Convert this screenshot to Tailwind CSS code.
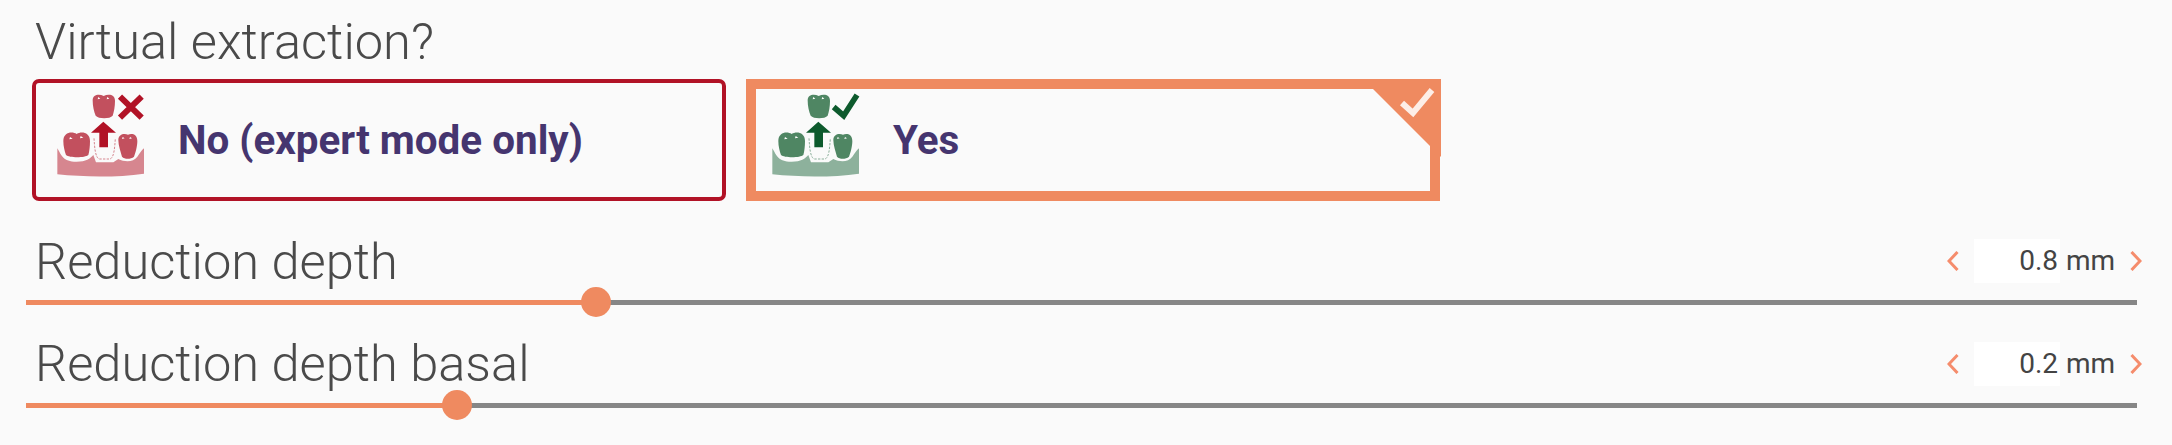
<!DOCTYPE html>
<html lang="en">
<head>
    <meta charset="UTF-8">
    <title>Virtual extraction</title>
    <script src="https://cdn.jsdelivr.net/npm/@tailwindcss/browser@4"></script>
</head>
<body class="bg-[#fafafa] font-['Roboto',sans-serif] overflow-hidden">
    <div class="w-[2172px] h-[445px] pl-[26px]">
        <div class="h-[79px] flex items-center pl-[9px] pt-[6px]">
            <span class="text-[50.6px] font-light leading-none text-[#4a4a4a]">Virtual extraction?</span>
        </div>

        <div class="flex gap-[20px] pl-[6px]">
            <!-- No -->
            <div class="w-[694px] h-[122px] border-[4px] border-[#b11226] rounded-[7px] flex items-start">
                <svg class="ml-[14px] mt-[2px] shrink-0" width="110" height="95" viewBox="0 0 330 285">
                    <path fill="#d6868f" d="M22 190C32 205 36 228 72 230C105 232 120 222 130 210L138 232H190L205 222C225 232 250 232 262 215C270 205 275 195 282 190V266C200 278 100 276 22 268Z"/>
                    <path fill="none" stroke="#d6868f" stroke-width="3" stroke-dasharray="7 4" d="M132 160C134 190 136 218 148 222H180C192 218 194 190 196 160"/>
                    <path fill="#c2505e" d="M128 46C128 28 148 26 161 33C175 26 196 28 195 48C195 65 192 80 188 92C180 102 145 102 137 92C132 80 128 65 128 46Z"/>
                    <path fill="#c2505e" d="M40 168C40 142 66 138 80 147C94 138 120 142 120 168C120 185 118 200 115 210C105 219 58 219 48 210C44 198 40 185 40 168Z"/>
                    <path fill="#c2505e" d="M205 165C205 146 224 144 234 149C244 144 262 146 262 168C262 185 256 205 252 215C242 223 224 223 216 215C212 200 205 182 205 165Z"/>
                    <path fill="#fff" d="M145 36l6 5-8 2zM172 36l6 5-8 2zM60 156l8 5-10 2zM92 153l8 5-10 2zM218 156l6 4-8 2zM240 156l6 4-8 2z"/>
                    <path fill="#b11226" d="M123 143L160 110L198 143H174V187H148V143Z"/>
                    <path fill="none" stroke="#b11226" stroke-width="18" d="M210 35L275 98M275 35L210 98"/>
                </svg>
                <span class="ml-[18px] mt-[33px] text-[40.4px] font-bold leading-[50px] text-[#45356f]">No (expert mode only)</span>
            </div>
            <!-- Yes, selected -->
            <div class="relative w-[694px] h-[122px] border-[10px] border-[#ef8a60] flex items-start">
                <svg class="ml-[9px] mt-[-4px] shrink-0" width="110" height="95" viewBox="0 0 330 285">
                    <path fill="#8db19c" d="M22 190C32 205 36 228 72 230C105 232 120 222 130 210L138 232H190L205 222C225 232 250 232 262 215C270 205 275 195 282 190V266C200 278 100 276 22 268Z"/>
                    <path fill="none" stroke="#8db19c" stroke-width="3" stroke-dasharray="7 4" d="M132 160C134 190 136 218 148 222H180C192 218 194 190 196 160"/>
                    <path fill="#4f8663" d="M128 46C128 28 148 26 161 33C175 26 196 28 195 48C195 65 192 80 188 92C180 102 145 102 137 92C132 80 128 65 128 46Z"/>
                    <path fill="#4f8663" d="M40 168C40 142 66 138 80 147C94 138 120 142 120 168C120 185 118 200 115 210C105 219 58 219 48 210C44 198 40 185 40 168Z"/>
                    <path fill="#4f8663" d="M205 165C205 146 224 144 234 149C244 144 262 146 262 168C262 185 256 205 252 215C242 223 224 223 216 215C212 200 205 182 205 165Z"/>
                    <path fill="#fff" d="M145 36l6 5-8 2zM172 36l6 5-8 2zM60 156l8 5-10 2zM92 153l8 5-10 2zM218 156l6 4-8 2zM240 156l6 4-8 2z"/>
                    <path fill="#0d5a2d" d="M123 143L160 110L198 143H174V187H148V143Z"/>
                    <path fill="none" stroke="#0d5a2d" stroke-width="17" d="M206 66L236 92L276 30"/>
                </svg>
                <span class="ml-[18px] mt-[27px] text-[40.4px] font-bold leading-[50px] text-[#45356f]">Yes</span>
                <svg class="absolute top-[-10px] right-[-10.5px]" width="78" height="78" viewBox="0 0 78 78">
                    <path fill="#ef8a60" d="M0 0H78V78Z"/>
                    <path fill="none" stroke="#fff" stroke-opacity="0.85" stroke-width="6" d="M39 24L50 34L69 11"/>
                </svg>
            </div>
        </div>

        <!-- Reduction depth -->
        <div class="w-[2111px] mt-[38px] h-[44px] flex items-center pl-[9px]">
            <span class="text-[50.6px] font-light leading-none text-[#4a4a4a] pt-[2px]">Reduction depth</span>
            <div class="ml-auto mr-[-5px] flex items-center">
                <svg width="12" height="20" viewBox="0 0 12 20"><path fill="none" stroke="#f58c6c" stroke-width="3" d="M10.5 1L2 10L10.5 19"/></svg>
                <div class="ml-[15px] w-[86px] h-[44px] bg-white pr-[2px] text-right text-[28px] leading-[44px] text-[#444]">0.8</div>
                <span class="ml-[6px] w-[48px] text-[28px] leading-[44px] text-[#444]">mm</span>
                <svg class="ml-[16px]" width="12" height="20" viewBox="0 0 12 20"><path fill="none" stroke="#f58c6c" stroke-width="3" d="M1.5 1L10 10L1.5 19"/></svg>
            </div>
        </div>
        <div class="relative w-[2111px] h-[5px] mt-[17px] bg-[#868686]">
            <div class="h-full w-[570px] bg-[#ef8a60]"></div>
            <div class="absolute left-[555px] top-[-13px] w-[30px] h-[30px] rounded-full bg-[#ef8a60]"></div>
        </div>

        <!-- Reduction depth basal -->
        <div class="w-[2111px] mt-[37px] h-[44px] flex items-center pl-[9px]">
            <span class="text-[50.6px] font-light leading-none text-[#4a4a4a]">Reduction depth basal</span>
            <div class="ml-auto mr-[-5px] flex items-center">
                <svg width="12" height="20" viewBox="0 0 12 20"><path fill="none" stroke="#f58c6c" stroke-width="3" d="M10.5 1L2 10L10.5 19"/></svg>
                <div class="ml-[15px] w-[86px] h-[44px] bg-white pr-[2px] text-right text-[28px] leading-[44px] text-[#444]">0.2</div>
                <span class="ml-[6px] w-[48px] text-[28px] leading-[44px] text-[#444]">mm</span>
                <svg class="ml-[16px]" width="12" height="20" viewBox="0 0 12 20"><path fill="none" stroke="#f58c6c" stroke-width="3" d="M1.5 1L10 10L1.5 19"/></svg>
            </div>
        </div>
        <div class="relative w-[2111px] h-[5px] mt-[17px] bg-[#868686]">
            <div class="h-full w-[431px] bg-[#ef8a60]"></div>
            <div class="absolute left-[416px] top-[-13px] w-[30px] h-[30px] rounded-full bg-[#ef8a60]"></div>
        </div>
    </div>
</body>
</html>
